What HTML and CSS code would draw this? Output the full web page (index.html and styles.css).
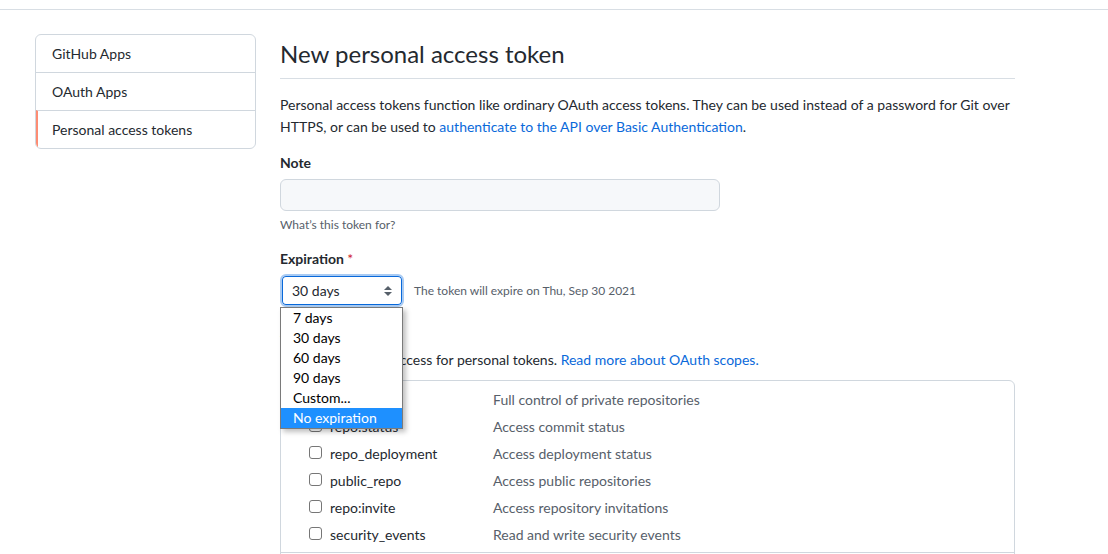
FILE: index.html
```html
<!DOCTYPE html>
<html>
<head>
<meta charset="utf-8">
<link rel="stylesheet" href="styles.css">
</head>
<body>
<header class="topbar"></header>
<div class="layout">
  <nav class="sidenav">
    <a class="nav-item" href="#">GitHub Apps</a>
    <a class="nav-item" href="#">OAuth Apps</a>
    <a class="nav-item selected" href="#">Personal access tokens</a>
  </nav>
  <main class="main">
    <div class="subhead"><h2 class="subhead-title">New personal access token</h2></div>
    <p class="intro">Personal access tokens function like ordinary OAuth access tokens. They can be used instead of a password for Git over HTTPS, or can be used to <a href="#">authenticate to the API over Basic Authentication</a>.</p>

    <div class="form-group">
      <label class="label">Note</label>
      <div class="input"></div>
      <p class="note">What’s this token for?</p>
    </div>

    <div class="form-group">
      <label class="label">Expiration <span class="req">*</span></label>
      <div class="exp-row">
        <div class="select-wrap">
          <div class="select">
            <span>30 days</span>
            <svg class="updown" width="8" height="10" viewBox="0 0 8 10"><path d="M4 0L8 4H0z M4 10L0 6h8z" fill="#57606a"/></svg>
          </div>
          <ul class="dropdown">
            <li>7 days</li>
            <li>30 days</li>
            <li>60 days</li>
            <li>90 days</li>
            <li>Custom...</li>
            <li class="active">No expiration</li>
          </ul>
        </div>
        <span class="exp-hint">The token will expire on Thu, Sep 30 2021</span>
      </div>
    </div>

    <div class="form-group scopes">
      <label class="label">Select scopes</label>
      <p class="scopes-desc">Scopes define the access for personal tokens. <a href="#">Read more about OAuth scopes.</a></p>
      <div class="scope-table">
        <div class="scope-group">
          <div class="scope-row">
            <div class="scope-name"><span class="cb"></span>repo</div>
            <div class="scope-desc">Full control of private repositories</div>
          </div>
          <div class="scope-row child">
            <div class="scope-name"><span class="cb"></span>repo:status</div>
            <div class="scope-desc">Access commit status</div>
          </div>
          <div class="scope-row child">
            <div class="scope-name"><span class="cb"></span>repo_deployment</div>
            <div class="scope-desc">Access deployment status</div>
          </div>
          <div class="scope-row child">
            <div class="scope-name"><span class="cb"></span>public_repo</div>
            <div class="scope-desc">Access public repositories</div>
          </div>
          <div class="scope-row child">
            <div class="scope-name"><span class="cb"></span>repo:invite</div>
            <div class="scope-desc">Access repository invitations</div>
          </div>
          <div class="scope-row child">
            <div class="scope-name"><span class="cb"></span>security_events</div>
            <div class="scope-desc">Read and write security events</div>
          </div>
        </div>
        <div class="scope-group next"></div>
      </div>
    </div>
  </main>
</div>
</body>
</html>
```
FILE: styles.css
```css
* { box-sizing: border-box; }
html, body { margin: 0; padding: 0; background: #fff; }
body {
  font-family: Lato, "Liberation Sans", sans-serif;
  font-size: 14px;
  line-height: 22px;
  color: #24292f;
  overflow: hidden;
  height: 554px;
}
a { color: #0969da; text-decoration: none; }

.topbar {
  height: 10px;
  border-bottom: 1px solid #d8dee4;
}

.layout {
  display: flex;
  gap: 24px;
  padding: 24px 0 0 35px;
}

.sidenav {
  width: 221px;
  flex: none;
  align-self: flex-start;
  border: 1px solid #d0d7de;
  border-radius: 6px;
  display: flex;
  flex-direction: column;
  overflow: hidden;
}
.nav-item {
  display: block;
  height: 38px;
  line-height: 37px;
  padding-left: 16px;
  color: #24292f;
  border-top: 1px solid #d0d7de;
}
.nav-item:first-child { border-top: 0; height: 37px; line-height: 37px; }
.nav-item.selected {
  border-left: 2px solid #fd8c73;
  padding-left: 14px;
}

.main { width: 735px; flex: none; }

.subhead {
  padding: 2px 0 6px;
  border-bottom: 1px solid #d8dee4;
}
.subhead-title {
  margin: 0;
  font-size: 24px;
  font-weight: 400;
  line-height: 36px;
}

.intro { margin: 15px 0 0; }

.form-group { margin-top: 14px; }
.label {
  display: block;
  font-weight: 700;
  line-height: 22px;
}
.req { color: #cf222e; font-weight: 400; }

.input {
  margin-top: 5px;
  width: 440px;
  height: 32px;
  background: #f6f8fa;
  border: 1px solid #d0d7de;
  border-radius: 6px;
}
.note {
  margin: 5px 0 0;
  font-size: 12px;
  line-height: 18px;
  color: #57606a;
}

.exp-row {
  margin-top: 4px;
  display: flex;
  align-items: center;
  gap: 10px;
}
.select-wrap { position: relative; }
.select {
  width: 124px;
  height: 33px;
  border: 2px solid #a9cbf3;
  border-radius: 6px;
  box-shadow: inset 0 0 0 1px #0969da;
  display: flex;
  align-items: center;
  justify-content: space-between;
  padding: 0 10px 0 10px;
  background: #fff;
}
.updown { display: block; }
.exp-hint {
  font-size: 12px;
  color: #57606a;
}

.dropdown {
  position: absolute;
  top: 100%;
  left: 0;
  width: 123px;
  margin: 0;
  padding: 0;
  list-style: none;
  background: #fff;
  border: 1px solid #7a7a7a;
  box-shadow: 3px 3px 5px rgba(0,0,0,0.25);
  z-index: 5;
  color: #000;
}
.dropdown li {
  height: 20px;
  line-height: 20px;
  padding-left: 12px;
}
.dropdown li.active {
  background: #1e90ff;
  color: #fff;
}

.scopes { margin-top: 15px; }
.scopes-desc { margin: 5px 0 0; }

.scope-table {
  margin-top: 9px;
  border: 1px solid #d0d7de;
  border-radius: 6px;
}
.scope-group { padding: 5px 0 4px; }
.scope-group + .scope-group { border-top: 1px solid #d0d7de; }
.scope-group.next { height: 40px; }
.scope-row {
  display: flex;
  height: 27px;
  align-items: center;
}
.scope-name {
  width: 212px;
  flex: none;
  display: flex;
  align-items: center;
  gap: 8px;
  padding-left: 12px;
}
.scope-row.child .scope-name { padding-left: 28px; }
.scope-desc { color: #57606a; }
.cb {
  display: inline-block;
  width: 13px;
  height: 13px;
  border: 1px solid #767676;
  border-radius: 3px;
  background: #fff;
  margin-top: -2px;
}
```
